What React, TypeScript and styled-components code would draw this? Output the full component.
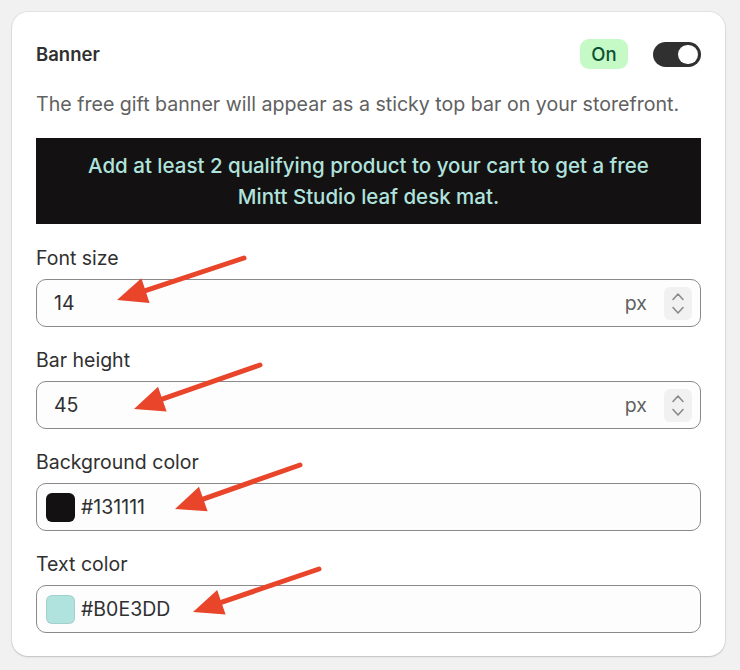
import React from "react";
import styled, { createGlobalStyle } from "styled-components";

const GlobalStyle = createGlobalStyle`
    html, body {
        margin: 0;
        padding: 0;
        background: #f1f1f1;
    }
    body {
        font-family: Inter, "Noto Sans", sans-serif;
        color: #303030;
        -webkit-font-smoothing: antialiased;
    }
`;

const Page = styled.div`
    position: relative;
    width: 740px;
    height: 670px;
    padding: 12px;
    box-sizing: border-box;
`;

const Card = styled.section`
    width: 713px;
    height: 644px;
    box-sizing: border-box;
    background: #ffffff;
    border-radius: 16px;
    box-shadow: 0 1px 2px rgba(0, 0, 0, 0.16), 0 0 0 1px rgba(0, 0, 0, 0.05);
    padding: 24px 24px 0 24px;
    display: flex;
    flex-direction: column;
`;

const Header = styled.div`
    display: flex;
    align-items: center;
    height: 36px;
`;

const Title = styled.h2`
    margin: 0;
    flex: 1;
    font-size: 18.5px;
    font-weight: 600;
    color: #303030;
`;

const Badge = styled.span`
    display: inline-flex;
    align-items: center;
    justify-content: center;
    width: 48px;
    height: 30px;
    border-radius: 9px;
    background: #c5f9c6;
    color: #0c5132;
    font-size: 18.5px;
    font-weight: 500;
    margin-right: 25px;
`;

const Toggle = styled.div<{ $on: boolean }>`
    position: relative;
    width: 48px;
    height: 25px;
    border-radius: 13px;
    background: ${(p) => (p.$on ? "#303030" : "#c8c8c8")};

    &::after {
        content: "";
        position: absolute;
        top: 3px;
        left: ${(p) => (p.$on ? "25px" : "3px")};
        width: 20px;
        height: 19px;
        border-radius: 10px;
        background: #ffffff;
    }
`;

const Description = styled.p`
    margin: 20px 0 0 0;
    font-size: 19.6px;
    line-height: 24px;
    color: #616161;
    white-space: nowrap;
`;

const Preview = styled.div<{ $bg: string; $fg: string }>`
    margin: 22px 0 1px 0;
    height: 86px;
    box-sizing: border-box;
    background: ${(p) => p.$bg};
    color: ${(p) => p.$fg};
    display: flex;
    align-items: center;
    justify-content: center;
    text-align: center;
    font-size: 20.5px;
    font-weight: 500;
    line-height: 31px;
    padding: 0 30px;
`;

const Field = styled.div`
    margin-top: 21px;
    display: flex;
    flex-direction: column;
`;

const Label = styled.label`
    font-size: 19.5px;
    line-height: 24px;
    color: #303030;
    margin-bottom: 9px;
`;

const InputBox = styled.div`
    height: 48px;
    box-sizing: border-box;
    border: 1px solid #8a8a8a;
    border-radius: 10px;
    background: #fdfdfd;
    display: flex;
    align-items: center;
    padding: 0 8px 0 17px;
    font-size: 19.5px;
    color: #303030;
`;

const ColorBox = styled(InputBox)`
    padding-left: 9px;
    gap: 6px;
`;

const Value = styled.span`
    flex: 1;
`;

const Suffix = styled.span`
    color: #616161;
    margin-right: 17px;
`;

const Spinner = styled.div`
    width: 28px;
    height: 33px;
    border-radius: 6px;
    background: #f1f1f1;
    display: flex;
    flex-direction: column;
    align-items: center;
    justify-content: center;
    gap: 5px;
`;

const Swatch = styled.span<{ $color: string }>`
    width: 29px;
    height: 29px;
    box-sizing: border-box;
    border-radius: 6px;
    background: ${(p) => p.$color};
    border: 1px solid rgba(0, 0, 0, 0.08);
`;

const Annotations = styled.svg`
    position: absolute;
    left: 0;
    top: 0;
    pointer-events: none;
`;

const Chevron = ({ up }: { up?: boolean }) => (
    <svg width="14" height="9" viewBox="0 0 14 9">
        <path
            d={up ? "M2 7.5 L7 2 L12 7.5" : "M2 1.5 L7 7 L12 1.5"}
            fill="none"
            stroke="#8a8a8a"
            strokeWidth="1.6"
            strokeLinecap="round"
            strokeLinejoin="round"
        />
    </svg>
);

const NumberField = ({ label, value }: { label: string; value: string }) => (
    <Field>
        <Label>{label}</Label>
        <InputBox>
            <Value>{value}</Value>
            <Suffix>px</Suffix>
            <Spinner>
                <Chevron up />
                <Chevron />
            </Spinner>
        </InputBox>
    </Field>
);

const ColorField = ({ label, value }: { label: string; value: string }) => (
    <Field>
        <Label>{label}</Label>
        <ColorBox>
            <Swatch $color={value} />
            <Value>{value}</Value>
        </ColorBox>
    </Field>
);

// red arrows drawn on top of the screenshot: [tailX, tailY, tipX, tipY]
const arrows = [
    [244, 258, 117, 300],
    [260, 365, 134, 409],
    [300, 465, 175, 509],
    [319, 569, 193, 612],
];

const Arrow = ({ a }: { a: number[] }) => {
    const [x1, y1, x2, y2] = a;
    const dx = x2 - x1;
    const dy = y2 - y1;
    const len = Math.sqrt(dx * dx + dy * dy);
    const ux = dx / len;
    const uy = dy / len;
    const headLen = 30;
    const headW = 13;
    const bx = x2 - ux * headLen;
    const by = y2 - uy * headLen;
    const pts = [
        `${x2},${y2}`,
        `${bx - uy * headW},${by + ux * headW}`,
        `${bx + uy * headW},${by - ux * headW}`,
    ].join(" ");
    return (
        <g>
            <line
                x1={x1}
                y1={y1}
                x2={bx + ux * 4}
                y2={by + uy * 4}
                stroke="#e8452a"
                strokeWidth="5"
                strokeLinecap="round"
            />
            <polygon points={pts} fill="#e8452a" />
        </g>
    );
};

export default function App() {
    return (
        <>
            <GlobalStyle />
            <Page>
                <Card>
                    <Header>
                        <Title>Banner</Title>
                        <Badge>On</Badge>
                        <Toggle $on />
                    </Header>
                    <Description>
                        The free gift banner will appear as a sticky top bar on
                        your storefront.
                    </Description>
                    <Preview $bg="#131111" $fg="#B0E3DD">
                        Add at least 2 qualifying product to your cart to get a
                        free Mintt Studio leaf desk mat.
                    </Preview>
                    <NumberField label="Font size" value="14" />
                    <NumberField label="Bar height" value="45" />
                    <ColorField label="Background color" value="#131111" />
                    <ColorField label="Text color" value="#B0E3DD" />
                </Card>
                <Annotations width="740" height="670" viewBox="0 0 740 670">
                    {arrows.map((a, i) => (
                        <Arrow key={i} a={a} />
                    ))}
                </Annotations>
            </Page>
        </>
    );
}
